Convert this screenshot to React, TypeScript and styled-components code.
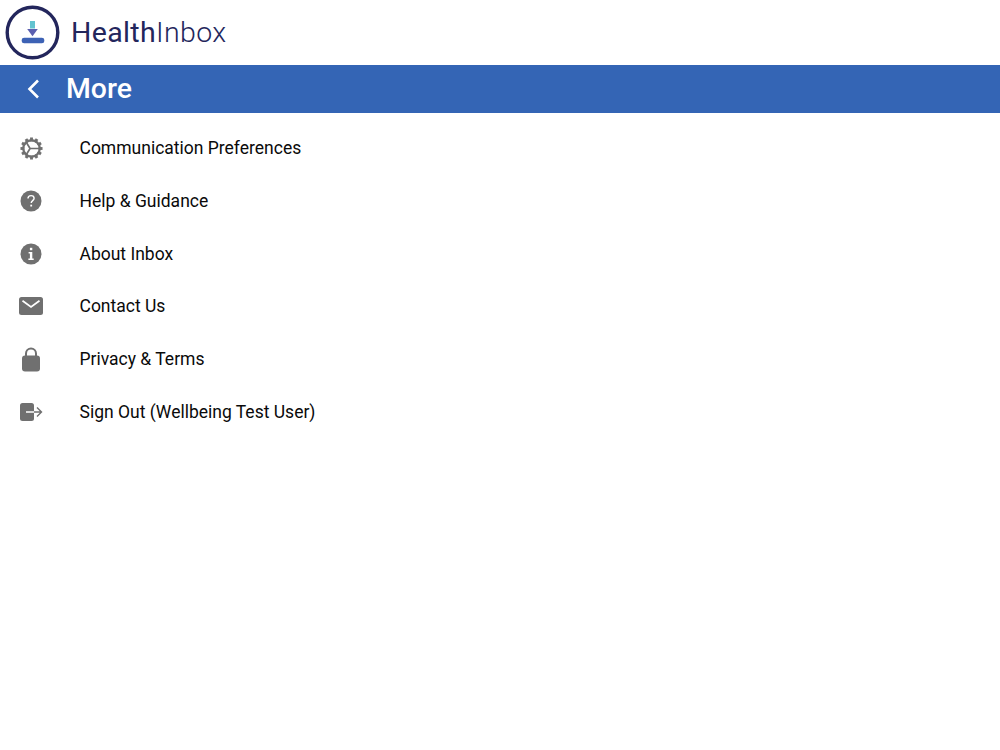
import React from "react";
import styled, { createGlobalStyle } from "styled-components";

const GlobalStyle = createGlobalStyle`
  html, body {
    margin: 0;
    background: #fff;
    font-family: Roboto, "Liberation Sans", sans-serif;
  }
`;

const Page = styled.div`
  width: 1000px;
  height: 750px;
  display: flex;
  flex-direction: column;
  overflow: hidden;
`;

const Header = styled.header`
  height: 65px;
  display: flex;
  align-items: center;
  padding-left: 5px;
  box-sizing: border-box;
`;

const Brand = styled.div`
  margin-left: 11px;
  font-family: Roboto, sans-serif;
  font-size: 28.5px;
  letter-spacing: 0.35px;
  color: #23265c;
  font-weight: 400;
`;

const BrandLight = styled.span`
  font-weight: 300;
`;

const TitleBar = styled.div`
  height: 48px;
  display: flex;
  align-items: center;
  background-color: #3465b5;
  color: #fff;
`;

const BackButton = styled.div`
  width: 66px;
  display: flex;
  justify-content: center;
`;

const Title = styled.h1`
  margin: 0 0 1px;
  font-size: 28.4px;
  font-weight: 500;
`;

const Menu = styled.nav`
  display: flex;
  flex-direction: column;
  padding-top: 9px;
`;

const Row = styled.div`
  height: 52.7px;
  display: flex;
  align-items: center;
  color: #0a0a0a;
  font-size: 17.5px;
`;

const IconCell = styled.div`
  width: 62px;
  display: flex;
  justify-content: center;
  color: #707070;
`;

const Label = styled.span`
  margin-left: 17.5px;
`;

const Logo = () => (
  <svg width="55" height="55" viewBox="0 0 55 55">
    <circle cx="27.5" cy="27.5" r="25.3" fill="none" stroke="#23265c" strokeWidth="3.4" />
    <rect x="25" y="16" width="5" height="7.5" fill="#62c3d0" />
    <path d="M22.2 24h10.6l-5.3 7.2z" fill="#5b5fb0" />
    <rect x="16.7" y="32.7" width="22.6" height="5.6" rx="2.4" fill="#3d62b5" />
  </svg>
);

const Gear = () => {
  const teeth = Array.from({ length: 12 }, (_, i) => i * 30);
  return (
    <svg width="23" height="23" viewBox="0 0 24 24">
      {teeth.map((a) => (
        <rect key={a} x="10.5" y="0.5" width="3" height="4" fill="currentColor" transform={`rotate(${a} 12 12)`} />
      ))}
      <circle cx="12" cy="12" r="8.6" fill="none" stroke="currentColor" strokeWidth="2.4" />
      <path d="M10.5 12L6.5 5.5M10.5 12H20M10.5 12L6.5 18.5" stroke="currentColor" strokeWidth="1.8" fill="none" />
    </svg>
  );
};

const Help = () => (
  <svg width="24" height="24" viewBox="0 0 24 24">
    <circle cx="12" cy="12" r="10.5" fill="currentColor" />
    <path d="M9 9.6c0-2 1.4-3 3.1-3s3 1.1 3 2.7c0 2.3-2.9 2.4-2.9 4.8" fill="none" stroke="#fff" strokeWidth="1.4" />
    <rect x="11.3" y="15.7" width="1.8" height="1.8" fill="#fff" />
  </svg>
);

const Info = () => (
  <svg width="24" height="24" viewBox="0 0 24 24">
    <circle cx="12" cy="12" r="10.5" fill="currentColor" />
    <rect x="10.9" y="5.8" width="2.4" height="2.4" fill="#fff" />
    <path d="M9.6 10h3.7v6.5h1.4v1.6H9.4v-1.6h1.5v-4.9H9.6z" fill="#fff" />
  </svg>
);

const Mail = () => (
  <svg width="24" height="18" viewBox="0 0 24 18">
    <rect width="24" height="18" rx="2.5" fill="currentColor" />
    <path d="M3.5 3.8L12 10l8.5-6.2" fill="none" stroke="#fff" strokeWidth="1.7" />
  </svg>
);

const Lock = () => (
  <svg width="20" height="26" viewBox="0 0 20 26">
    <path d="M5 11V7.5a5 5 0 0 1 10 0V11" fill="none" stroke="currentColor" strokeWidth="2" />
    <rect x="1" y="9.5" width="18" height="16" rx="3" fill="currentColor" />
  </svg>
);

const SignOut = () => (
  <svg width="24" height="20" viewBox="0 0 24 20">
    <rect x="1" y="1" width="14" height="18" rx="2.5" fill="currentColor" />
    <path d="M14 10h8.5M18 5.5L22.5 10 18 14.5" fill="none" stroke="currentColor" strokeWidth="1.4" />
    <path d="M7 10h8" stroke="#fff" strokeWidth="1.5" />
  </svg>
);

const items = [
  { label: "Communication Preferences", icon: <Gear /> },
  { label: "Help & Guidance", icon: <Help /> },
  { label: "About Inbox", icon: <Info /> },
  { label: "Contact Us", icon: <Mail /> },
  { label: "Privacy & Terms", icon: <Lock /> },
  { label: "Sign Out (Wellbeing Test User)", icon: <SignOut /> },
];

const App: React.FC = () => (
  <Page>
    <GlobalStyle />
    <Header>
      <Logo />
      <Brand>
        Health<BrandLight>Inbox</BrandLight>
      </Brand>
    </Header>
    <TitleBar>
      <BackButton>
        <svg width="16" height="22" viewBox="0 0 16 22">
          <path d="M13 2.5L4.5 11l8.5 8.5" fill="none" stroke="#fff" strokeWidth="2.6" />
        </svg>
      </BackButton>
      <Title>More</Title>
    </TitleBar>
    <Menu>
      {items.map((item) => (
        <Row key={item.label}>
          <IconCell>{item.icon}</IconCell>
          <Label>{item.label}</Label>
        </Row>
      ))}
    </Menu>
  </Page>
);

export default App;
